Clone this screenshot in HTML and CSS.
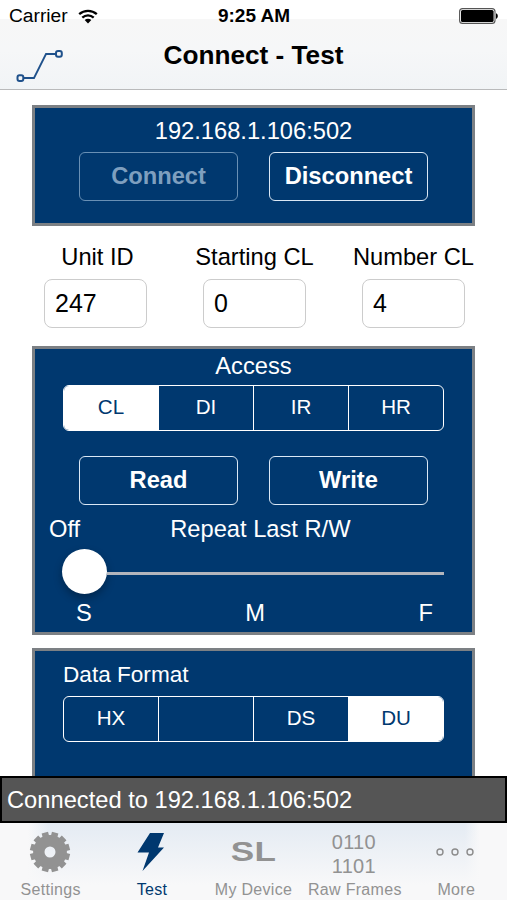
FILE: index.html
```html
<!DOCTYPE html>
<html lang="en">

<head>
    <meta charset="UTF-8">
    <meta name="viewport" content="width=device-width, initial-scale=1.0">
    <title>Connect - Test</title>
    <link rel="stylesheet" href="styles.css">
</head>

<body>
    <header class="header">
        <div class="status">
            <div class="carrier">
                <span>Carrier</span>
                <svg width="20" height="15" viewBox="0 0 20 15">
                    <path d="M1.2 5.2C6.2.7 13.8.7 18.8 5.2M4.3 8.600c3.300-3 8.100-3 11.400 0" fill="none" stroke="#000" stroke-width="2.300" />
                    <path d="M6.700 11.100c1.900-1.800 4.700-1.800 6.600 0L10 14.400z" />
                </svg>
            </div>
            <span class="time">9:25 AM</span>
            <svg class="battery" width="40" height="16" viewBox="0 0 40 16">
                <rect x=".6" y=".6" width="35.400" height="14.800" rx="3" fill="#fff" stroke="#555" stroke-width="1.100" />
                <rect x="2" y="2" width="32.600" height="12" rx="1.600" />
                <path d="M37 5.200c2.400.6 2.400 5 0 5.600z" />
            </svg>
        </div>
        <div class="nav">
            <svg class="logo" width="50" height="36" viewBox="0 0 50 36" fill="none" stroke="#1f518b">
                <path d="M8 30h11L31 6H41" stroke-width="1.800" />
                <rect x="2.500" y="27.200" width="5.800" height="5.800" rx="2" stroke-width="2" />
                <rect x="41" y="3" width="5.800" height="5.800" rx="2" stroke-width="2" />
            </svg>
            <h1>Connect - Test</h1>
        </div>
    </header>

    <main>
        <section class="panel connection">
            <div class="address">192.168.1.106:502</div>
            <div class="buttons">
                <button disabled>Connect</button>
                <button>Disconnect</button>
            </div>
        </section>

        <div class="fields">
            <label>Unit ID<input type="text" value="247"></label>
            <label>Starting CL<input type="text" value="0"></label>
            <label>Number CL<input type="text" value="4"></label>
        </div>

        <section class="panel access">
            <div class="title">Access</div>
            <div class="segments">
                <div class="active">CL</div>
                <div>DI</div>
                <div>IR</div>
                <div>HR</div>
            </div>
            <div class="buttons">
                <button>Read</button>
                <button>Write</button>
            </div>
            <div class="repeat">
                <span>Off</span>
                <span>Repeat Last R/W</span>
            </div>
            <div class="slider">
                <div class="thumb"></div>
                <div class="track"></div>
            </div>
            <div class="scale">
                <span>S</span>
                <span>M</span>
                <span>F</span>
            </div>
        </section>

        <section class="panel format">
            <div class="title">Data Format</div>
            <div class="segments">
                <div>HX</div>
                <div></div>
                <div>DS</div>
                <div class="active">DU</div>
            </div>
        </section>
    </main>

    <div class="message">Connected to 192.168.1.106:502</div>

    <nav class="tabs">
        <div class="tab">
            <div class="icon">
                <svg width="42" height="42" viewBox="-21 -21 42 42">
                    <circle r="11.200" fill="none" stroke="#929292" stroke-width="11.400" />
                    <g fill="#929292" transform="rotate(15)">
                        <path id="teeth" d="M-3.300-20h6.600v6h-6.600zM-3.300 14h6.600v6h-6.600z" />
                        <use href="#teeth" transform="rotate(30)" />
                        <use href="#teeth" transform="rotate(60)" />
                        <use href="#teeth" transform="rotate(90)" />
                        <use href="#teeth" transform="rotate(120)" />
                        <use href="#teeth" transform="rotate(150)" />
                    </g>
                </svg>
            </div>
            <span>Settings</span>
        </div>
        <div class="tab selected">
            <div class="icon">
                <svg width="28" height="40" viewBox="0 0 28 40">
                    <path d="M13 1h14l-6 14.500h6L5.500 39l6.500-18.500H.5z" fill="#00386f" />
                </svg>
            </div>
            <span>Test</span>
        </div>
        <div class="tab">
            <div class="icon device">SL</div>
            <span>My Device</span>
        </div>
        <div class="tab">
            <div class="icon frames">0110<br>1101</div>
            <span>Raw Frames</span>
        </div>
        <div class="tab">
            <div class="icon">
                <svg width="38" height="8" viewBox="0 0 38 8" fill="none" stroke="#8c8c8c" stroke-width="1.400">
                    <circle cx="4" cy="4" r="3" />
                    <circle cx="19" cy="4" r="3" />
                    <circle cx="34" cy="4" r="3" />
                </svg>
            </div>
            <span>More</span>
        </div>
    </nav>
</body>

</html>
```
FILE: styles.css
```css
* {
    box-sizing: border-box;
}

body {
    margin: 0;
    height: 900px;
    overflow: hidden;
    display: flex;
    flex-direction: column;
    background-color: white;
    font-family: "Liberation Sans", Arial, sans-serif;
    font-size: 23.7px;
    line-height: 28px;
    color: black;
}

svg {
    display: block;
}

.header {
    height: 90px;
    flex-shrink: 0;
    border-bottom: 1px solid #b9babb;
    background: linear-gradient(#fff 19px, #f7f7f7 19px, #f6f7f8 50px, #f1f4f6 89px);
}

.status {
    height: 32px;
    display: grid;
    grid-template-columns: 1fr auto 1fr;
    align-items: center;
    padding: 0 8px 0 9px;
    font-size: 19.2px;
}

.carrier {
    display: flex;
    align-items: center;
    gap: 10px;
}

.time {
    font-weight: bold;
    font-size: 19px;
}

.battery {
    justify-self: end;
}

.nav {
    height: 57px;
    display: grid;
    grid-template-columns: 1fr auto 1fr;
}

.logo {
    margin: 16px 0 0 15px;
}

h1 {
    margin: 8px 0 0;
    font-size: 26.2px;
    line-height: 30px;
}

main {
    flex: 1;
    min-height: 0;
    overflow: hidden;
    padding: 15px 32px 0;
}

.panel {
    border: 3px solid #7c8084;
    background-color: #00386f;
    color: white;
}

.connection {
    height: 121px;
    padding-top: 9px;
    text-align: center;
}

.address {
    height: 35px;
}

.buttons {
    display: flex;
    justify-content: center;
    gap: 31px;
}

button {
    width: 159px;
    height: 49px;
    padding: 0 0 1px;
    border: 1.5px solid #dbe8f5;
    border-radius: 6px;
    background-color: transparent;
    color: white;
    font: bold 23.7px "Liberation Sans", Arial, sans-serif;
}

button:disabled {
    border-color: #6990b5;
    color: #7e9fbf;
}

.fields {
    display: flex;
    justify-content: space-between;
    padding-top: 17px;
    height: 120px;
    margin: 0 -18px 0 -16px;
}

label {
    width: 159px;
    display: flex;
    flex-direction: column;
    align-items: center;
    gap: 8px;
}

label:first-child {
    text-indent: 4px;
}

input {
    width: 103px;
    height: 49px;
    padding: 0 10px 1px;
    border: 1px solid #ccc;
    border-radius: 8px;
    font: 25px "Liberation Sans", Arial, sans-serif;
    text-indent: 0;
}

.access {
    height: 289px;
    padding-top: 3px;
}

.access .title {
    height: 33px;
    text-align: center;
}

.segments {
    display: flex;
    width: 381px;
    height: 46px;
    margin: 0 auto;
    border: 1.5px solid white;
    border-radius: 6px;
    overflow: hidden;
    font-size: 20.6px;
    line-height: 41px;
    text-align: center;
}

.segments div {
    flex: 1;
}

.segments div + div {
    border-left: 1.5px solid white;
}

.segments .active {
    background-color: white;
    color: #00386f;
}

.access .buttons {
    margin-top: 25px;
}

.repeat {
    display: flex;
    gap: 90px;
    padding: 10px 0 0 14px;
}

.slider {
    display: flex;
    align-items: center;
    height: 45px;
    margin: 6px 28px 0 27px;
}

.thumb {
    width: 45px;
    height: 45px;
    border-radius: 50%;
    background-color: white;
    box-shadow: 0 4px 8px rgba(0, 0, 0, 0.3);
}

.track {
    flex: 1;
    height: 3px;
    margin-top: 3px;
    background-color: #b2b5bc;
}

.scale {
    display: flex;
    justify-content: space-between;
    padding: 5px 39px 0 41px;
}

.format {
    height: 180px;
    margin-top: 13px;
    padding-top: 10px;
}

.format .title {
    height: 35px;
    padding-left: 28px;
    font-size: 22.6px;
}

.message {
    height: 47px;
    flex-shrink: 0;
    padding-left: 5px;
    border: 2px solid black;
    background-color: #555;
    color: white;
    line-height: 44px;
}

.tabs {
    height: 77px;
    flex-shrink: 0;
    display: flex;
    background: linear-gradient(rgba(248, 248, 249, 0), #f8f8f9 62px), linear-gradient(90deg, #f8f8f9 28px, #e4ebf3 48px, #e4ebf3 465px, #f8f8f9 480px);
}

.tab {
    width: 101.4px;
    display: flex;
    flex-direction: column;
    align-items: center;
    color: #929292;
    font-size: 16px;
    letter-spacing: 0.3px;
    line-height: 21px;
    white-space: nowrap;
}

.icon {
    height: 56px;
    display: flex;
    align-items: center;
    padding-top: 2px;
    margin-left: -2px;
}

.selected {
    color: #00386f;
}

.device {
    margin-left: 1px;
    font-size: 27px;
    font-weight: bold;
    transform: scaleX(1.3);
}

.frames {
    padding-top: 6px;
    font-size: 20px;
    line-height: 24px;
}
```
